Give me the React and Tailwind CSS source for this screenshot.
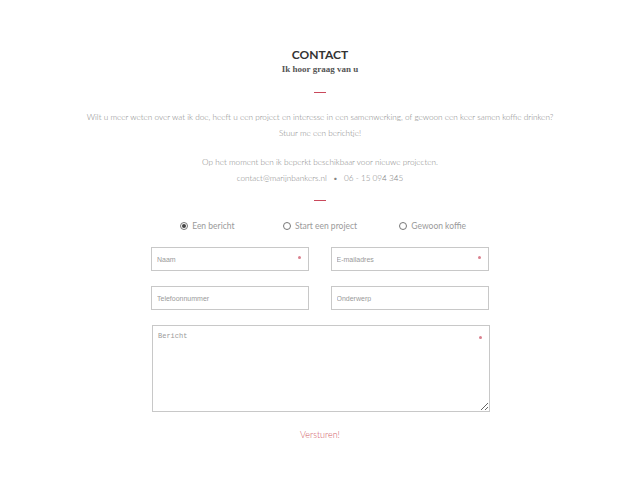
import { useState } from "react";

const Field = ({ placeholder, required }) => (
  <div className="relative w-[158px] h-[24px]">
    <input
      placeholder={placeholder}
      className="w-full h-full border border-[#c8c8c8] bg-white px-[5px] text-[7px] text-[#555] placeholder:text-[#9a9a9a] outline-none font-['Liberation_Sans',sans-serif]"
    />
    {required && (
      <span className="absolute right-[8px] top-[12px] w-[3px] h-[3px] rounded-full bg-[#d9808e]" />
    )}
  </div>
);

const Radio = ({ label, checked, onClick }) => (
  <button onClick={onClick} className="justify-self-center flex items-center gap-[4px] text-[8.5px] text-[#9a9a9a]">
    <span className="w-[8px] h-[8px] rounded-full border border-[#777] flex items-center justify-center">
      {checked && <span className="w-[4px] h-[4px] rounded-full bg-[#444]" />}
    </span>
    {label}
  </button>
);

const App = () => {
  const [kind, setKind] = useState("bericht");

  return (
    <div className="w-[640px] h-[491px] bg-white font-['Lato',sans-serif] flex flex-col items-center pt-[47px]">
      {/* Heading */}
      <h1 className="text-[12px] leading-[15px] font-bold text-[#333]">CONTACT</h1>
      <p className="text-[9px] leading-[12px] font-bold text-[#555] font-['Liberation_Serif',serif] mt-[1px]">
        Ik hoor graag van u
      </p>
      <div className="w-[12px] h-px bg-[#c9485b] mt-[17px]" />

      {/* Intro */}
      <div className="mt-[17px] text-center text-[8.2px] leading-[15.5px] font-light text-[#858585]">
        <p>Wilt u meer weten over wat ik doe, heeft u een project en interesse in een samenwerking, of gewoon een keer samen koffie drinken?</p>
        <p>Stuur me een berichtje!</p>
        <p className="mt-[14px]">Op het moment ben ik beperkt beschikbaar voor nieuwe projecten.</p>
        <p>
          contact@marijnbankers.nl <span className="mx-[4px]">•</span> 06 - 15 094 345
        </p>
      </div>
      <div className="w-[12px] h-px bg-[#c9485b] mt-[14px]" />

      {/* Form */}
      <div className="mt-[19px] grid grid-cols-3 w-[338px]">
        <Radio label="Een bericht" checked={kind === "bericht"} onClick={() => setKind("bericht")} />
        <Radio label="Start een project" checked={kind === "project"} onClick={() => setKind("project")} />
        <Radio label="Gewoon koffie" checked={kind === "koffie"} onClick={() => setKind("koffie")} />
      </div>

      <div className="mt-[11px] grid grid-cols-2 gap-x-[21px] gap-y-[15px] w-[338px]">
        <Field placeholder="Naam" required />
        <Field placeholder="E-mailadres" required />
        <Field placeholder="Telefoonnummer" />
        <Field placeholder="Onderwerp" />
      </div>

      <div className="relative mt-[18px] w-[338px] h-[87px] ml-[2px]">
        <textarea
          placeholder="Bericht"
          className="w-full h-full border border-[#c8c8c8] bg-white px-[5px] py-[5px] text-[7px] text-[#555] placeholder:text-[#9a9a9a] outline-none font-['Liberation_Mono',monospace]"
        />
        <span className="absolute right-[8px] top-[11px] w-[3px] h-[3px] rounded-full bg-[#d9808e]" />
      </div>

      <button className="mt-[16px] text-[9px] font-light text-[#d0575f]">Versturen!</button>
    </div>
  );
};

export default App;
